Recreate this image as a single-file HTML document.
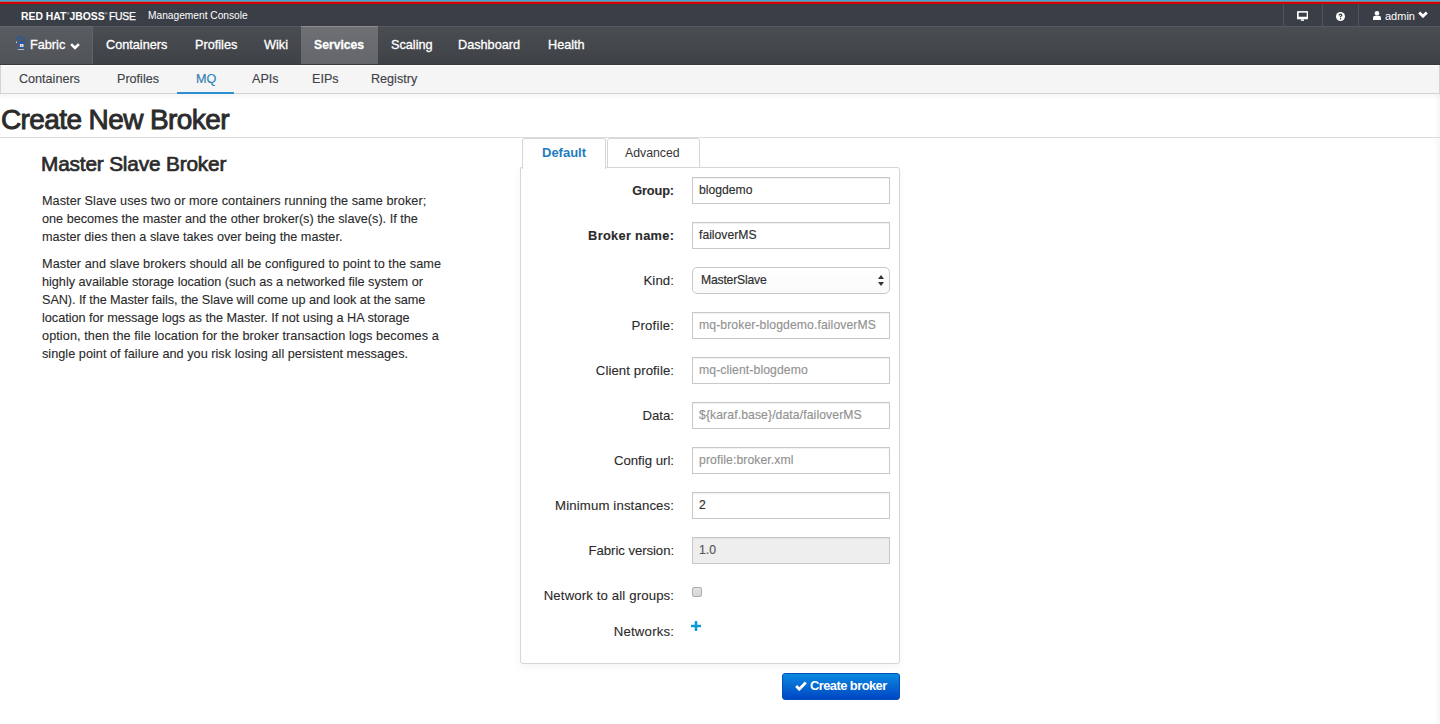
<!DOCTYPE html>
<html><head><meta charset="utf-8">
<style>
*{box-sizing:border-box;margin:0;padding:0}
html,body{width:1440px;height:724px;overflow:hidden;background:#fff;font-family:"Liberation Sans",sans-serif;color:#363636}
.a{position:absolute;white-space:nowrap;line-height:1}
.bx{position:absolute}
.navt{position:absolute;top:39px;color:#fff;-webkit-text-stroke:0.3px #fff;font-size:12.7px;white-space:nowrap;line-height:1}
.subt{position:absolute;top:73px;color:#3f4349;-webkit-text-stroke:0.15px #3f4349;font-size:12.6px;white-space:nowrap;line-height:1}
.lbl{position:absolute;right:766px;font-size:13.2px;color:#2a2a2a;-webkit-text-stroke:0.1px #2a2a2a;white-space:nowrap;line-height:1;text-align:right}
.inp{position:absolute;left:692px;width:198px;height:27px;border:1px solid #c8c8c8;background:#fff;box-shadow:inset 0 1px 1px rgba(0,0,0,.06)}
.itx{position:absolute;left:699px;font-size:12.2px;white-space:nowrap;line-height:1;color:#2e2e2e;-webkit-text-stroke:0.15px currentColor}
.ph{color:#929292;letter-spacing:0.1px}
.para{position:absolute;left:42px;font-size:12.7px;line-height:18px;color:#2a2a2a;-webkit-text-stroke:0.1px #2a2a2a;white-space:nowrap}
</style></head><body>
<!-- top strips -->
<div class="bx" style="left:0;top:0;width:1440px;height:1px;background:#47a4d8"></div>
<div class="bx" style="left:0;top:1px;width:1440px;height:1px;background:#8a7a80"></div>
<div class="bx" style="left:0;top:2px;width:1440px;height:2px;background:#d30000"></div>
<div class="bx" style="left:0;top:4px;width:1440px;height:1px;background:#30434b"></div>
<div class="bx" style="left:0;top:5px;width:1440px;height:21px;background:#3a3e46"></div>
<div class="a" style="left:21px;top:12px;font-size:10.4px;font-weight:bold;color:#fff">RED HAT<span style="font-size:4px;vertical-align:5px;font-weight:normal">&#174;</span>JBOSS<span style="font-size:4px;vertical-align:5px;font-weight:normal">&#174;</span></div><div class="a" style="left:109px;top:12px;font-size:10.4px;letter-spacing:-0.3px;color:#fff;-webkit-text-stroke:0.25px #fff">FUSE</div>
<div class="a" style="left:148px;top:11px;font-size:10.2px;color:#fff">Management Console</div>
<!-- right top icons -->
<div class="bx" style="left:1283px;top:4px;width:1px;height:22px;background:#51555b"></div>
<div class="bx" style="left:1322px;top:4px;width:1px;height:22px;background:#51555b"></div>
<div class="bx" style="left:1358px;top:4px;width:1px;height:22px;background:#51555b"></div>
<svg class="bx" style="left:1297px;top:11px" width="11" height="10" viewBox="0 0 11 10"><path fill-rule="evenodd" d="M1 0 H10 Q11 0 11 1 V8.3 H0 V1 Q0 0 1 0 Z M1.7 1.7 V5.8 H9.7 V1.7 Z" fill="#fff"/><rect x="1.2" y="0.6" width="8.6" height="0.9" fill="#9a9ca0" opacity="0.5"/><rect x="3.8" y="8.3" width="3.2" height="1.5" fill="#fff"/></svg>
<svg class="bx" style="left:1336px;top:12px" width="9" height="9" viewBox="0 0 9 9"><circle cx="4.5" cy="4.5" r="4.5" fill="#fff"/><path d="M3.2 3.5 Q3.2 2.2 4.5 2.2 Q5.8 2.2 5.8 3.3 Q5.8 4 4.5 4.5 L4.5 5.2" fill="none" stroke="#3a3e46" stroke-width="1.3"/><rect x="3.85" y="6.1" width="1.3" height="1.3" fill="#3a3e46"/></svg>
<svg class="bx" style="left:1373px;top:11px" width="8" height="9" viewBox="0 0 8 9"><circle cx="4" cy="2.3" r="2.3" fill="#fff"/><path d="M0 9 L0 6.8 Q0 4.8 2.2 4.8 L5.8 4.8 Q8 4.8 8 6.8 L8 9 Z" fill="#fff"/></svg>
<div class="a" style="left:1385px;top:11px;font-size:11px;color:#fff">admin</div>
<svg class="bx" style="left:1418px;top:11px" width="10" height="7" viewBox="0 0 10 7"><path d="M1.2 1.4 L5 5.2 L8.8 1.4" fill="none" stroke="#fff" stroke-width="2.8"/></svg>

<!-- nav -->
<div class="bx" style="left:0;top:26px;width:1440px;height:39px;background:linear-gradient(#4a4e53,#3e4247)"></div>
<div class="bx" style="left:0;top:26px;width:1440px;height:1px;background:#55595e"></div>
<div class="bx" style="left:0;top:64px;width:1440px;height:1px;background:#35383d"></div>
<div class="bx" style="left:0;top:26px;width:92px;height:38px;background:linear-gradient(#595c60,#505357)"></div>
<div class="bx" style="left:0;top:26px;width:92px;height:1px;background:#65686b"></div>
<div class="bx" style="left:92px;top:26px;width:1px;height:38px;background:#606368"></div>
<div class="bx" style="left:301px;top:26px;width:77px;height:38px;background:linear-gradient(#6e7074,#63666a)"></div>
<div class="bx" style="left:301px;top:26px;width:77px;height:1px;background:#8a8c8f"></div>
<svg class="bx" style="left:15px;top:35px" width="12" height="15" viewBox="0 0 12 15"><g fill="none" stroke="#1d5cb0" stroke-width="0.8"><rect x="1.4" y="2.4" width="2" height="2.2" rx="0.5"/><rect x="4.3" y="1.3" width="3.1" height="1.9" rx="0.6"/><rect x="8.4" y="3.7" width="2.3" height="2" rx="0.5"/></g><path d="M0.8 6.6 L1.8 6.2 L4.2 8.4 L4.2 7.2 L8.6 7.2 L8.6 8.4 L10.6 6.4 L11.4 6.9 L9.2 9.4 L9.2 13.5 L3.9 13.5 L3.9 9.4 Z" fill="#1d5cb0"/><circle cx="6.4" cy="7.3" r="1.1" fill="#1d5cb0"/><rect x="4.9" y="9" width="3.6" height="2.9" fill="#e8eef6"/><circle cx="6.6" cy="10.4" r="0.9" fill="#f08a3c"/><circle cx="1.5" cy="7.2" r="0.7" fill="#dfe8f3"/><rect x="2.8" y="14" width="6.4" height="0.9" fill="#b9c6d6"/></svg>
<div class="navt" style="left:30px">Fabric</div>
<svg class="bx" style="left:70px;top:42.5px" width="10" height="7" viewBox="0 0 10 7"><path d="M1.1 1.1 L5 5 L8.9 1.1" fill="none" stroke="#fff" stroke-width="2.6"/></svg>
<div class="navt" style="left:106px">Containers</div>
<div class="navt" style="left:195px">Profiles</div>
<div class="navt" style="left:264px">Wiki</div>
<div class="navt" style="left:314px;font-weight:bold;font-size:12.2px">Services</div>
<div class="navt" style="left:391px">Scaling</div>
<div class="navt" style="left:458px">Dashboard</div>
<div class="navt" style="left:548px">Health</div>

<!-- subnav -->
<div class="bx" style="left:0;top:65px;width:1440px;height:29px;background:#f5f5f5;border-bottom:1px solid #d4d4d4;border-left:1px solid #d4d4d4"></div>
<div class="subt" style="left:19px">Containers</div>
<div class="subt" style="left:117px">Profiles</div>
<div class="subt" style="left:196px;color:#2b8fd0">MQ</div>
<div class="subt" style="left:252px">APIs</div>
<div class="subt" style="left:312px">EIPs</div>
<div class="subt" style="left:371px">Registry</div>
<div class="bx" style="left:177px;top:92px;width:57px;height:2px;background:#2b8fd0"></div>
<div class="bx" style="left:0;top:94px;width:1440px;height:5px;background:linear-gradient(rgba(0,0,0,.04),rgba(0,0,0,0))"></div>
<div class="bx" style="left:1px;top:65px;width:1438px;height:1px;background:#fff"></div><div class="bx" style="left:1439px;top:65px;width:1px;height:29px;background:#d4d4d4"></div><div class="bx" style="left:1434px;top:94px;width:6px;height:630px;background:linear-gradient(90deg,rgba(0,0,0,0),rgba(0,0,0,.035))"></div>

<!-- title -->
<div class="a" style="left:1px;top:106px;font-size:28px;letter-spacing:-0.6px;color:#2b2b2b;-webkit-text-stroke:0.9px #2b2b2b">Create New Broker</div>
<div class="bx" style="left:0;top:137px;width:1440px;height:1px;background:#dcdcdc"></div>

<!-- left column -->
<div class="a" style="left:41px;top:154px;font-size:20.8px;letter-spacing:-0.17px;color:#2b2b2b;-webkit-text-stroke:0.7px #2b2b2b">Master Slave Broker</div>
<div class="para" style="top:192px"><span style="letter-spacing:0.042px">Master Slave uses two or more containers running the same broker;</span><br><span style="letter-spacing:-0.012px">one becomes the master and the other broker(s) the slave(s). If the</span><br>master dies then a slave takes over being the master.</div>
<div class="para" style="top:255px"><span style="letter-spacing:0.058px">Master and slave brokers should all be configured to point to the same</span><br><span style="letter-spacing:-0.019px">highly available storage location (such as a networked file system or</span><br><span style="letter-spacing:-0.077px">SAN). If the Master fails, the Slave will come up and look at the same</span><br><span style="letter-spacing:-0.031px">location for message logs as the Master. If not using a HA storage</span><br><span style="letter-spacing:0.075px">option, then the file location for the broker transaction logs becomes a</span><br><span style="letter-spacing:0.022px">single point of failure and you risk losing all persistent messages.</span></div>

<!-- panel & tabs -->
<div class="bx" style="left:520px;top:167px;width:380px;height:497px;border:1px solid #d6d6d6;border-radius:0 3px 3px 3px;background:#fff;box-shadow:0 2px 8px rgba(0,0,0,.05)"></div>
<div class="bx" style="left:522px;top:138px;width:84px;height:31px;border:1px solid #d6d6d6;border-bottom:none;border-radius:3px 3px 0 0;background:#fff"></div>
<div class="bx" style="left:607px;top:138px;width:93px;height:30px;border:1px solid #d6d6d6;border-radius:3px 3px 0 0;background:#fff"></div>
<div class="a" style="left:542px;top:146px;font-size:13px;font-weight:bold;color:#1f7cc0">Default</div>
<div class="a" style="left:625px;top:147px;font-size:12.3px;color:#363636">Advanced</div>

<!-- form rows -->
<div class="lbl" style="top:185px;font-weight:bold;font-size:12.8px;letter-spacing:-0.14px;margin-right:--0.14px">Group:</div>
<div class="inp" style="top:177px"></div><div class="itx" style="top:184px">blogdemo</div>
<div class="lbl" style="top:230px;font-weight:bold;font-size:12.8px;letter-spacing:0.31px;margin-right:-0.31px">Broker name:</div>
<div class="inp" style="top:222px"></div><div class="itx" style="top:229px">failoverMS</div>
<div class="lbl" style="top:274px;letter-spacing:0.12px;margin-right:-0.12px">Kind:</div>
<div class="inp" style="top:267px;border-radius:5px;box-shadow:none;background:linear-gradient(#fff,#fafafa)"></div><div class="itx" style="top:274px;left:701px;letter-spacing:-0.2px">MasterSlave</div>
<svg class="bx" style="left:878px;top:275px" width="6" height="11" viewBox="0 0 6 11"><path d="M3 0 L6 4 L0 4 Z M0 7 L6 7 L3 11 Z" fill="#333"/></svg>
<div class="lbl" style="top:319px;letter-spacing:0.21px;margin-right:-0.21px">Profile:</div>
<div class="inp" style="top:312px"></div><div class="itx ph" style="top:319px">mq-broker-blogdemo.failoverMS</div>
<div class="lbl" style="top:364px;letter-spacing:0.09px;margin-right:-0.09px">Client profile:</div>
<div class="inp" style="top:357px"></div><div class="itx ph" style="top:364px">mq-client-blogdemo</div>
<div class="lbl" style="top:409px">Data:</div>
<div class="inp" style="top:402px"></div><div class="itx ph" style="top:409px">${karaf.base}/data/failoverMS</div>
<div class="lbl" style="top:454px">Config url:</div>
<div class="inp" style="top:447px"></div><div class="itx ph" style="top:454px">profile:broker.xml</div>
<div class="lbl" style="top:499px;letter-spacing:0.14px;margin-right:-0.14px">Minimum instances:</div>
<div class="inp" style="top:492px"></div><div class="itx" style="top:499px">2</div>
<div class="lbl" style="top:544px;letter-spacing:-0.07px;margin-right:--0.07px">Fabric version:</div>
<div class="inp" style="top:537px;background:#eee"></div><div class="itx" style="top:544px;color:#555">1.0</div>
<div class="lbl" style="top:589px;letter-spacing:0.13px;margin-right:-0.13px">Network to all groups:</div>
<div class="bx" style="left:692px;top:587px;width:10px;height:10px;border:1px solid #acacac;border-radius:2px;background:linear-gradient(#e2e2e2,#d6d6d6)"></div>
<div class="lbl" style="top:625px;letter-spacing:0.2px;margin-right:-0.2px">Networks:</div>
<svg class="bx" style="left:691px;top:621px" width="10" height="10" viewBox="0 0 10 10"><path d="M3.7 0 H6.3 V3.7 H10 V6.3 H6.3 V10 H3.7 V6.3 H0 V3.7 H3.7 Z" fill="#0e9ad6"/></svg>

<!-- button -->
<div class="bx" style="left:782px;top:673px;width:118px;height:27px;border:1px solid #0050b8;border-radius:3px;background:linear-gradient(#0a8ae0,#0046c4)"></div>
<svg class="bx" style="left:795px;top:681px" width="12" height="10" viewBox="0 0 12 10"><path d="M1.2 5 L4.3 8.2 L10.8 1.6" fill="none" stroke="#fff" stroke-width="2.8" stroke-linejoin="miter"/></svg>
<div class="a" style="left:810px;top:680px;font-size:12.9px;letter-spacing:-0.55px;font-weight:bold;color:#fff">Create broker</div>
</body></html>
